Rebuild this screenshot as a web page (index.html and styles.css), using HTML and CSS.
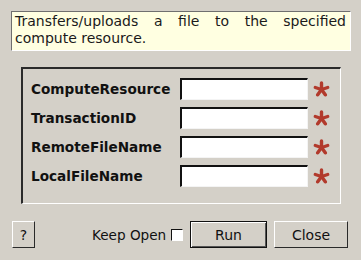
FILE: index.html
```html
<!DOCTYPE html>
<html lang="en">
<head>
    <meta charset="UTF-8">
    <title>File Transfer</title>
    <link rel="stylesheet" href="styles.css">
</head>
<body>
    <div class="dialog">
        <div class="info">Transfers/uploads a file to the specified compute resource.</div>
        <div class="group">
            <div class="row">
                <label class="label">ComputeResource</label>
                <input class="field" type="text">
                <svg class="req" width="17" height="16" viewBox="0 0 17 16"><g stroke="#b23a2c" stroke-width="3.4" stroke-linecap="round"><line x1="8.5" y1="8.5" x2="8.5" y2="2"/><line x1="8.5" y1="8.5" x2="14.7" y2="6.5"/><line x1="8.5" y1="8.5" x2="12.3" y2="13.8"/><line x1="8.5" y1="8.5" x2="4.7" y2="13.8"/><line x1="8.5" y1="8.5" x2="2.3" y2="6.5"/></g></svg>
            </div>
            <div class="row">
                <label class="label">TransactionID</label>
                <input class="field" type="text">
                <svg class="req" width="17" height="16" viewBox="0 0 17 16"><g stroke="#b23a2c" stroke-width="3.4" stroke-linecap="round"><line x1="8.5" y1="8.5" x2="8.5" y2="2"/><line x1="8.5" y1="8.5" x2="14.7" y2="6.5"/><line x1="8.5" y1="8.5" x2="12.3" y2="13.8"/><line x1="8.5" y1="8.5" x2="4.7" y2="13.8"/><line x1="8.5" y1="8.5" x2="2.3" y2="6.5"/></g></svg>
            </div>
            <div class="row">
                <label class="label">RemoteFileName</label>
                <input class="field" type="text">
                <svg class="req" width="17" height="16" viewBox="0 0 17 16"><g stroke="#b23a2c" stroke-width="3.4" stroke-linecap="round"><line x1="8.5" y1="8.5" x2="8.5" y2="2"/><line x1="8.5" y1="8.5" x2="14.7" y2="6.5"/><line x1="8.5" y1="8.5" x2="12.3" y2="13.8"/><line x1="8.5" y1="8.5" x2="4.7" y2="13.8"/><line x1="8.5" y1="8.5" x2="2.3" y2="6.5"/></g></svg>
            </div>
            <div class="row">
                <label class="label">LocalFileName</label>
                <input class="field" type="text">
                <svg class="req" width="17" height="16" viewBox="0 0 17 16"><g stroke="#b23a2c" stroke-width="3.4" stroke-linecap="round"><line x1="8.5" y1="8.5" x2="8.5" y2="2"/><line x1="8.5" y1="8.5" x2="14.7" y2="6.5"/><line x1="8.5" y1="8.5" x2="12.3" y2="13.8"/><line x1="8.5" y1="8.5" x2="4.7" y2="13.8"/><line x1="8.5" y1="8.5" x2="2.3" y2="6.5"/></g></svg>
            </div>
        </div>
        <div class="footer">
            <button class="btn help">?</button>
            <span class="keep">Keep Open</span>
            <span class="check"></span>
            <button class="btn run">Run</button>
            <button class="btn close">Close</button>
        </div>
    </div>
</body>
</html>
```

FILE: styles.css
```css
body {
    margin: 0;
    background-color: #d4d0c8;
    font-family: "DejaVu Sans", sans-serif;
    font-size: 14px;
    color: #000;
}

.dialog {
    width: 361px;
    height: 260px;
    padding: 11px 0 0 11px;
    box-sizing: border-box;
}

.info {
    width: 340px;
    height: 40px;
    box-sizing: border-box;
    background-color: #ffffe1;
    border-top: 1px solid #6f6f6f;
    border-left: 1px solid #6f6f6f;
    border-right: 1px solid #ffffff;
    border-bottom: 1px solid #ffffff;
    padding: 1px 4px 0 3px;
    text-align: justify;
    line-height: 17px;
    color: #1a1a1a;
}

.group {
    margin: 16px 0 0 10px;
    width: 320px;
    height: 137px;
    box-sizing: border-box;
    border-top: 2px solid #2a2a2a;
    border-left: 2px solid #2a2a2a;
    border-right: 1px solid #ffffff;
    border-bottom: 1px solid #ffffff;
    padding: 9px 0 0 8px;
}

.row {
    display: flex;
    align-items: center;
    height: 22px;
    margin-bottom: 7px;
}

.label {
    width: 149px;
    font-weight: bold;
    font-size: 13.6px;
    color: #111;
}

.field {
    width: 128px;
    height: 22px;
    box-sizing: border-box;
    margin: 0;
    padding: 0 2px;
    background: #fff;
    border-top: 2px solid #111;
    border-left: 2px solid #111;
    border-right: 1px solid #f4f4f4;
    border-bottom: 1px solid #f4f4f4;
    outline: none;
}

.req {
    display: block;
    margin-left: 5px;
}

.footer {
    display: flex;
    align-items: center;
    margin-top: 17px;
    height: 27px;
}

.btn {
    font-family: "DejaVu Sans", sans-serif;
    font-size: 14px;
    background-color: #d4d0c8;
    color: #111;
    height: 27px;
    padding: 0;
    margin: 0;
    box-sizing: border-box;
    border-top: 1px solid #ffffff;
    border-left: 1px solid #ffffff;
    border-right: 1px solid #2a2a2a;
    border-bottom: 1px solid #2a2a2a;
}

.help {
    width: 23px;
    margin-left: 1px;
}

.keep {
    width: 75px;
    margin-left: 57px;
    white-space: nowrap;
    font-size: 13.6px;
    color: #111;
}

.check {
    width: 12px;
    height: 12px;
    box-sizing: border-box;
    margin-left: 4px;
    background: #fff;
    border-top: 1px solid #111;
    border-left: 1px solid #111;
    border-right: 1px solid #fff;
    border-bottom: 1px solid #fff;
}

.run {
    width: 77px;
    margin-left: 7px;
    border: 1px solid #111;
    box-shadow: inset 1px 1px 0 #fff, inset -1px -1px 0 #555;
}

.close {
    width: 74px;
    margin-left: 7px;
}
```
